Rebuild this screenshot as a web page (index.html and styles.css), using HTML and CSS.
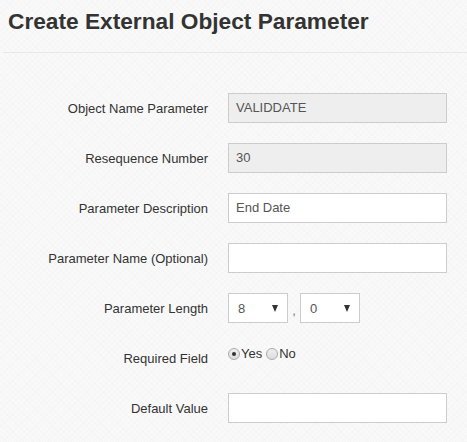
FILE: index.html
```html
<!DOCTYPE html>
<html>
<head>
<meta charset="utf-8">
<link rel="stylesheet" href="styles.css">
</head>
<body>
<div class="page">
  <h1 class="title">Create External Object Parameter</h1>
  <div class="rule"></div>
  <form class="form">
    <div class="row">
      <label class="lbl">Object Name Parameter</label>
      <div class="field"><div class="input disabled">VALIDDATE</div></div>
    </div>
    <div class="row">
      <label class="lbl">Resequence Number</label>
      <div class="field"><div class="input disabled">30</div></div>
    </div>
    <div class="row">
      <label class="lbl">Parameter Description</label>
      <div class="field"><div class="input">End Date</div></div>
    </div>
    <div class="row">
      <label class="lbl">Parameter Name (Optional)</label>
      <div class="field"><div class="input"></div></div>
    </div>
    <div class="row">
      <label class="lbl">Parameter Length</label>
      <div class="field sel-group">
        <div class="select"><span>8</span><span class="arrow"></span></div>
        <span class="comma">,</span>
        <div class="select"><span>0</span><span class="arrow"></span></div>
      </div>
    </div>
    <div class="row radio-row">
      <label class="lbl">Required Field</label>
      <div class="field radios">
        <span class="radio checked"></span><span class="rtext">Yes</span>
        <span class="radio"></span><span class="rtext">No</span>
      </div>
    </div>
    <div class="row">
      <label class="lbl">Default Value</label>
      <div class="field"><div class="input"></div></div>
    </div>
  </form>
</div>
</body>
</html>
```
FILE: styles.css
```css
html, body {
  margin: 0;
  padding: 0;
  background: #f8f8f8;
}
body {
  font-family: "Liberation Sans", Arial, sans-serif;
  color: #333;
}
.page {
  width: 467px;
  height: 442px;
  overflow: hidden;
  background-color: #f9f9f9;
  background-image:
    repeating-linear-gradient(45deg, rgba(0,0,0,0.012) 0 1px, transparent 1px 4px),
    repeating-linear-gradient(-45deg, rgba(0,0,0,0.012) 0 1px, transparent 1px 4px);
}
.title {
  margin: 0;
  padding: 8px 0 0 8px;
  font-size: 22.7px;
  line-height: 26px;
  font-weight: bold;
  color: #333;
}
.rule {
  margin: 18px 0 0 3px;
  height: 1px;
  background: #e8e8e8;
}
.form {
  margin: 40px 0 0 0;
  display: flex;
  flex-direction: column;
  gap: 20px;
}
.row {
  display: flex;
  align-items: center;
  height: 30px;
}
.lbl {
  width: 208px;
  text-align: right;
  font-size: 13px;
  color: #333;
  flex: none;
}
.field {
  margin-left: 20px;
  width: 219px;
}
.input {
  box-sizing: border-box;
  height: 30px;
  border: 1px solid #ccc;
  background: #fff;
  font-size: 13px;
  color: #555;
  padding: 0 7px;
  line-height: 28px;
}
.input.disabled {
  background: #eee;
}
.sel-group {
  display: flex;
  align-items: center;
}
.select {
  box-sizing: border-box;
  width: 60px;
  height: 30px;
  border: 1px solid #ccc;
  background: #fff;
  font-size: 13px;
  color: #555;
  padding: 0 7px 0 9px;
  display: flex;
  align-items: center;
  justify-content: space-between;
}
.arrow {
  width: 0;
  height: 0;
  border-left: 3.5px solid transparent;
  border-right: 3.5px solid transparent;
  border-top: 7px solid #333;
  margin-right: 2px;
}
.comma {
  width: 12px;
  text-align: center;
  font-size: 13px;
  color: #777;
  margin-top: 4px;
}
.radios {
  display: flex;
  align-items: center;
  align-self: flex-start;
  margin-top: 3px;
  font-size: 13px;
  color: #333;
}
.radio {
  box-sizing: border-box;
  width: 12px;
  height: 12px;
  border-radius: 50%;
  border: 1px solid #aaa;
  background: linear-gradient(#f0f0f0, #dcdcdc);
  position: relative;
}
.radio.checked::after {
  content: "";
  position: absolute;
  left: 3px;
  top: 3px;
  width: 4px;
  height: 4px;
  border-radius: 50%;
  background: #333;
}
.rtext {
  margin: 0 4px 0 1px;
}
```
